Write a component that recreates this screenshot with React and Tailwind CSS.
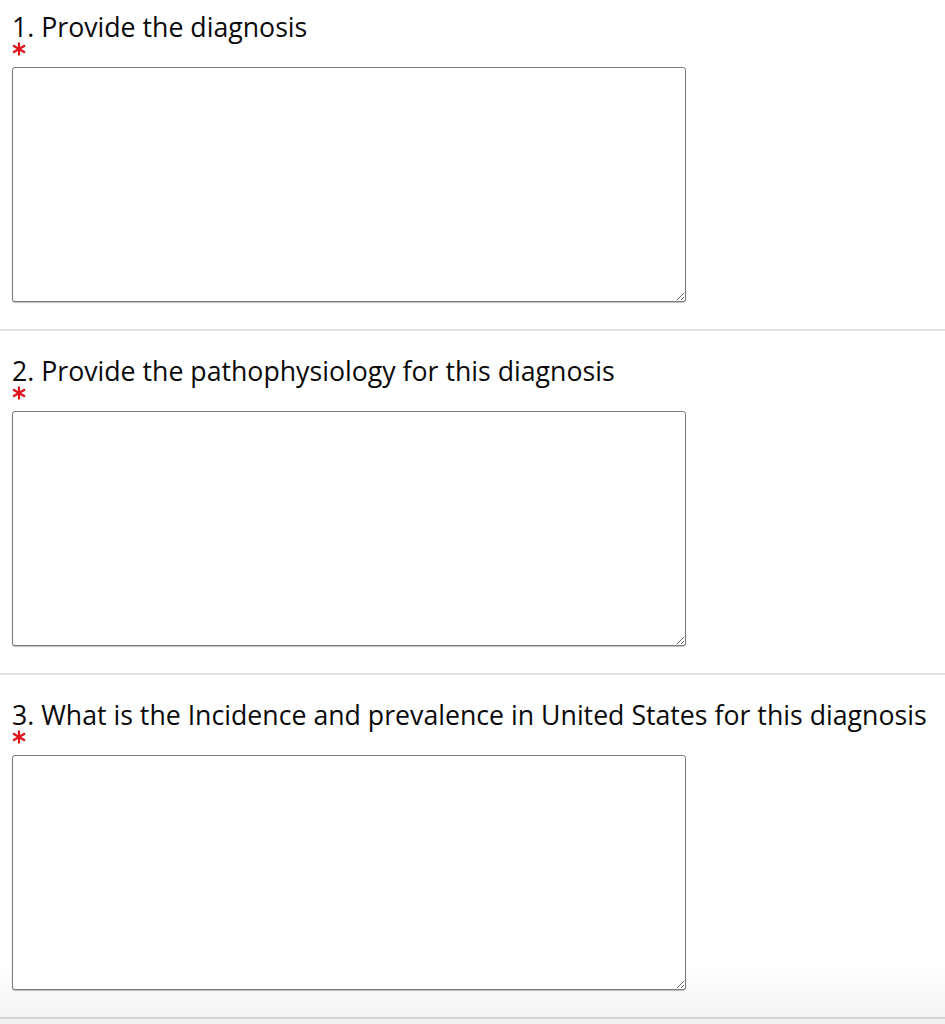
import React from 'react';

const questions = [
    '1. Provide the diagnosis',
    '2. Provide the pathophysiology for this diagnosis',
    '3. What is the Incidence and prevalence in United States for this diagnosis',
];

const RequiredMark = () => (
    <svg width="14" height="14" viewBox="0 0 14 14" className="block ml-[12px]">
        <g stroke="#e0101a" strokeWidth="2.2" strokeLinecap="butt">
            <line x1="7" y1="0.5" x2="7" y2="13.5" />
            <line x1="1" y1="3.5" x2="13" y2="10.5" />
            <line x1="1" y1="10.5" x2="13" y2="3.5" />
        </g>
    </svg>
);

const Question = ({ label, first, last }) => (
    <div
        className={`${first ? 'pt-[12px]' : 'pt-[25px]'} pb-[27px] border-b-2 ${
            last ? 'border-[#d6d6d6] bg-gradient-to-b from-white from-85% to-[#f4f4f4]' : 'border-[#e2e2e2]'
        }`}
    >
        <div className="pl-[12px] text-[26.7px] leading-[30px] text-[#0a0a0a]">{label}</div>
        <RequiredMark />
        <div className="px-[12px] mt-[11px]">
            <textarea
                className="block w-[674px] h-[235px] bg-white border border-[#7a7a7a] rounded-[3px] shadow-[0_1px_1px_rgba(0,0,0,0.25)] outline-none"
            />
        </div>
    </div>
);

export default function App() {
    return (
        <div className="min-h-screen bg-[#f0f0f0]" style={{ fontFamily: '"Open Sans", sans-serif' }}>
            <div className="bg-white">
                {questions.map((q, i) => (
                    <Question key={q} label={q} first={i === 0} last={i === questions.length - 1} />
                ))}
            </div>
        </div>
    );
}
